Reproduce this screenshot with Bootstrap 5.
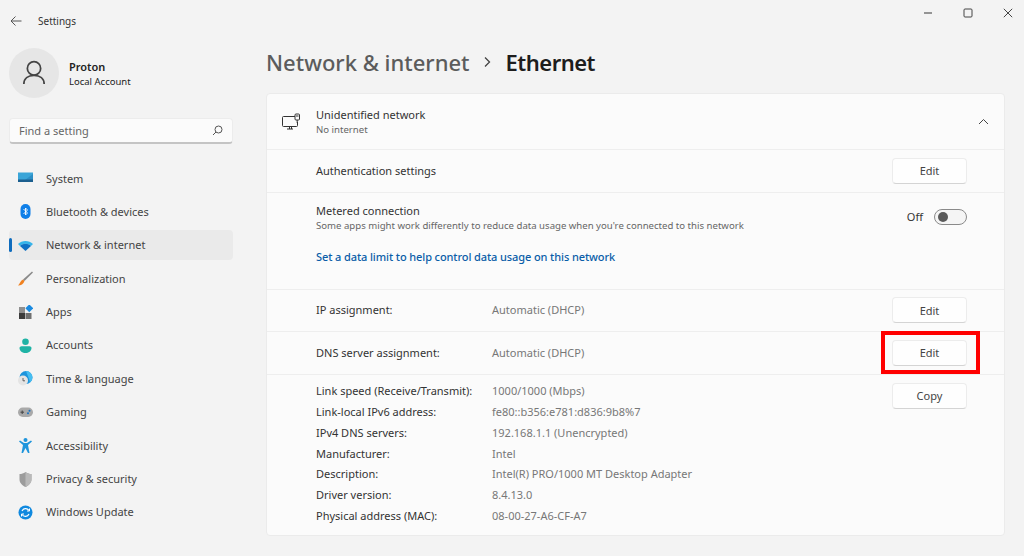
<!DOCTYPE html>
<html lang="en">
<head>
<meta charset="utf-8">
<title>Settings</title>
<link rel="stylesheet" href="https://cdn.jsdelivr.net/npm/bootstrap@5.3.0/dist/css/bootstrap.min.css">
<style>
html,body{height:100%;overflow:hidden}
body{background:#f3f3f3;color:#1b1b1b;font-family:"Noto Sans","Open Sans",sans-serif;font-size:11px;line-height:16px}
.win-shell{width:1024px;height:556px}
.title-bar{height:41px;padding-left:10px}
.title-text{font-size:10px;margin-left:16px;color:#333}
.win-ctrls{gap:30px;padding-right:11px;margin-top:8px}
.side-col{width:242px;padding-left:9px;padding-right:9px;flex:none}
.user-box{height:51px;margin-top:6px;gap:10px}
.user-text{padding-top:3px}
.avatar{width:50px;height:50px;border-radius:50%;background:#e6e6e6}
.user-name{font-size:11px;font-weight:600;line-height:15px;color:#222}
.user-sub{font-size:9.5px;line-height:16px;color:#222}
.search-box{height:26px;margin-top:20px;width:224px;background:#fbfbfb;border:1px solid #ececec;border-bottom:2px solid #c4c4c4;border-radius:4px;padding:0 9px;color:#666;font-size:11px}
.menu-list{margin-top:19.5px;list-style:none;padding:0;width:224px}
.menu-item{height:30px;margin-bottom:3.4px;border-radius:4px;padding-left:9px;gap:13px;position:relative;color:#444;font-size:11px}
.menu-item.is-on{background:#eaeaea}
.menu-item.is-on::before{content:"";position:absolute;left:0;top:8px;width:3px;height:14px;border-radius:2px;background:#0f6cbd}
.menu-icon{width:15px;height:15px;flex:none}
.main-col{width:739px;margin-left:24px;flex:none}
.crumbs{height:53px;margin-top:-1px;padding-bottom:10px;font-size:22px;font-weight:500;line-height:44px;gap:13px;color:#5c5c5c}
.crumb-now{color:#1d1d1d;font-weight:600;letter-spacing:-.5px;margin-left:2px}
.set-panel{background:#fbfbfb;border:1px solid #ebebeb;border-radius:4px;height:443px;width:739px;font-size:11px;color:#333}
.set-row{border-bottom:1px solid #eeeeee;padding-left:49px;padding-right:37px}
.head-row{height:56px;padding-left:14px;padding-right:15px;gap:15px}
.row-42{height:42.6px}
.metered-row{height:97px;padding-top:10px}
.set-sub{font-size:9.6px;line-height:14px;color:#666}
.set-key{width:176px;flex:none}
.set-val{color:#777}
.win-btn{width:75px;height:26px;flex:none;background:#fefefe;border:1px solid #ececec;border-bottom-color:#d4d4d4;border-radius:4px;padding:0;font-size:11px;color:#444;line-height:1;--bs-btn-hover-bg:#fefefe}
.mark-wrap{position:relative}
.red-frame{position:absolute;left:-11px;right:-13px;top:-9px;bottom:-8px;border:4px solid #f00;pointer-events:none}
.data-link{color:#0a5da8;text-decoration:none;font-weight:500;margin-top:16px;display:block;letter-spacing:-.1px}
.toggle-wrap{gap:11px;margin-top:6px;color:#333}
.switch-track{width:33px;height:16px;border:1px solid #8a8a8a;border-radius:8px;background:#f5f5f5;padding-left:3px}
.switch-knob{width:10px;height:10px;border-radius:50%;background:#5a5a5a}
.detail-block{padding:6px 37px 0 49px}
.detail-line{height:20.8px}
.detail-list{flex:1;padding-top:0}
.copy-btn{margin-top:2px}
</style>
</head>
<body>
<div class="win-shell d-flex flex-column">
  <div class="title-bar d-flex align-items-center">
    <svg width="12" height="12" viewBox="0 0 12 12" fill="none" stroke="#555" stroke-width="1"><path d="M11.5 6H1M5.5 1.5 1 6l4.5 4.500"/></svg>
    <span class="title-text">Settings</span>
    <div class="ms-auto win-ctrls d-flex align-items-center align-self-start">
      <svg width="10" height="10" viewBox="0 0 10 10" fill="none" stroke="#555" stroke-width="1.2"><path d="M1 5h8"/></svg>
      <svg width="10" height="10" viewBox="0 0 10 10" fill="none" stroke="#444" stroke-width="1"><rect x="1" y="1" width="8" height="8" rx="1"/></svg>
      <svg width="10" height="10" viewBox="0 0 10 10" fill="none" stroke="#444" stroke-width="1"><path d="M.8.8l8.4 8.4M9.2.8.8 9.2"/></svg>
    </div>
  </div>
  <div class="d-flex flex-fill">
    <div class="side-col">
      <div class="user-box d-flex align-items-center">
        <div class="avatar d-flex align-items-center justify-content-center">
          <svg width="24" height="26" viewBox="0 0 26 28" fill="none" stroke="#444" stroke-width="1.9"><circle cx="13" cy="9" r="7.2"/><path d="M2 26c0-6 4.500-9.500 11-9.500S24 20 24 26"/></svg>
        </div>
        <div class="user-text">
          <div class="user-name">Proton</div>
          <div class="user-sub">Local Account</div>
        </div>
      </div>
      <div class="search-box d-flex align-items-center justify-content-between">
        <span>Find a setting</span>
        <svg width="11" height="11" viewBox="0 0 11 11" fill="none" stroke="#555" stroke-width="1"><circle cx="6.500" cy="4.500" r="3.500"/><path d="M4 7 1 10"/></svg>
      </div>
      <ul class="menu-list">
        <li class="menu-item d-flex align-items-center">
          <svg class="menu-icon" viewBox="0 0 15 15"><rect y="1.500" width="15" height="9" fill="#3aa5d8"/><path d="M5 10.500 15 3v7.500z" fill="#2c8fc6"/><rect y="8.500" width="15" height="2.500" fill="#1b5f8f"/></svg>
          <span>System</span>
        </li>
        <li class="menu-item d-flex align-items-center">
          <svg class="menu-icon" viewBox="0 0 15 15"><rect x="2.500" y="0" width="10" height="15" rx="5" fill="#0f7fe8"/><path d="M5.500 5l4 4-2 2V4l2 2-4 4" fill="none" stroke="#fff" stroke-width=".9"/></svg>
          <span>Bluetooth &amp; devices</span>
        </li>
        <li class="menu-item is-on d-flex align-items-center">
          <svg class="menu-icon" viewBox="0 0 15 15"><path d="M0 6c4-4 11-4 15 0l-2 2c-3-3-8-3-11 0z" fill="#35b4ea"/><path d="M2 8c3-3 8-3 11 0l-5.500 5z" fill="#1071c4"/></svg>
          <span>Network &amp; internet</span>
        </li>
        <li class="menu-item d-flex align-items-center">
          <svg class="menu-icon" viewBox="0 0 15 15"><path d="M14 .500 15 1.500 6.500 10 5 8.500z" fill="#8a8a8a"/><path d="M5 8.500 6.500 10c-1 3-3.500 4.500-6.500 4.500C2 13 2 10 5 8.500z" fill="#f0811f"/></svg>
          <span>Personalization</span>
        </li>
        <li class="menu-item d-flex align-items-center">
          <svg class="menu-icon" viewBox="0 0 15 15"><rect x="1" y="2" width="6" height="6" fill="#8f8f8f"/><rect x="1" y="8" width="6" height="6" fill="#3b3b3b"/><rect x="7.500" y="8" width="6" height="6" fill="#707070"/><rect x="8.500" y="0.500" width="5.500" height="5.500" fill="#1a8ae0" transform="rotate(45 11.250 3.250)"/></svg>
          <span>Apps</span>
        </li>
        <li class="menu-item d-flex align-items-center">
          <svg class="menu-icon" viewBox="0 0 15 15"><circle cx="7.500" cy="3.800" r="3.300" fill="#1fb3a5"/><path d="M1.500 10c0-1 1-1.800 2-1.800h8c1 0 2 .8 2 1.800 0 3-3 5-6 5s-6-2-6-5z" fill="#1fb3a5"/></svg>
          <span>Accounts</span>
        </li>
        <li class="menu-item d-flex align-items-center">
          <svg class="menu-icon" viewBox="0 0 15 15"><circle cx="8" cy="6.500" r="6.500" fill="#1d94dc"/><path d="M8 0a6.500 6.500 0 0 1 4 11.500C11 7 9 3 8 0z" fill="#46bdf0"/><circle cx="5" cy="9.500" r="5" fill="#e4e4e4"/><path d="M5 7v2.800h2" fill="none" stroke="#555" stroke-width=".9"/></svg>
          <span>Time &amp; language</span>
        </li>
        <li class="menu-item d-flex align-items-center">
          <svg class="menu-icon" viewBox="0 0 15 15"><rect y="2.500" width="15" height="9.500" rx="4.700" fill="#a9a9a9"/><path d="M2.500 7.200h3.500M4.200 5.500v3.500" stroke="#444" stroke-width="1"/><circle cx="10" cy="8.300" r="1" fill="#1672c4"/><circle cx="11.500" cy="5.800" r="1" fill="#1672c4"/></svg>
          <span>Gaming</span>
        </li>
        <li class="menu-item d-flex align-items-center">
          <svg class="menu-icon" viewBox="0 0 15 15"><circle cx="7.500" cy="2" r="2" fill="#1f95dc"/><path d="M1 3.500 2 2.500 6 5h3l4-2.500 1 1L10 7l1.500 8H10L7.500 10 5 15H3.500L5 7z" fill="#1f95dc"/></svg>
          <span>Accessibility</span>
        </li>
        <li class="menu-item d-flex align-items-center">
          <svg class="menu-icon" viewBox="0 0 15 15"><path d="M7.500 0c2 1.500 4 2 6 2v5.500c0 3.500-3 6-6 7.500-3-1.500-6-4-6-7.500V2c2 0 4-.5 6-2z" fill="#9c9c9c"/><path d="M7.500 0c2 1.500 4 2 6 2v5.500c0 3.500-3 6-6 7.500z" fill="#b9b9b9"/></svg>
          <span>Privacy &amp; security</span>
        </li>
        <li class="menu-item d-flex align-items-center">
          <svg class="menu-icon" viewBox="0 0 15 15"><circle cx="7.500" cy="7.500" r="7" fill="#1089df"/><path d="M11 5.500A4 4 0 0 0 4 6M4 9.500A4 4 0 0 0 11 9" fill="none" stroke="#fff" stroke-width="1.200"/><path d="M11.500 3.500v2.500H9M3.500 11.500V9H6" fill="none" stroke="#fff" stroke-width="1"/></svg>
          <span>Windows Update</span>
        </li>
      </ul>
    </div>
    <div class="main-col">
      <div class="crumbs d-flex align-items-center">
        <span>Network &amp; internet</span>
        <svg width="8" height="12" viewBox="0 0 8 12" fill="none" stroke="#444" stroke-width="1.300"><path d="M2 1.500 6.500 6 2 10.500"/></svg>
        <span class="crumb-now">Ethernet</span>
      </div>
      <div class="set-panel d-flex flex-column">
        <div class="set-row head-row d-flex align-items-center">
          <svg width="20" height="20" viewBox="0 0 20 20" fill="none" stroke="#333" stroke-width="1"><path d="M14 4.500H2.500a1 1 0 0 0-1 1v8a1 1 0 0 0 1 1h13a1 1 0 0 0 1-1V10"/><path d="M6 17h6M8.500 14.500V17M10.500 14.500V17"/><rect x="14" y="2" width="4.500" height="6" rx="1"/><path d="M16.200 8v3M15 4h2.500"/></svg>
          <div>
            <div>Unidentified network</div>
            <div class="set-sub">No internet</div>
          </div>
          <svg class="ms-auto" width="11" height="7" viewBox="0 0 11 7" fill="none" stroke="#444" stroke-width="1"><path d="M1 6 5.500 1.500 10 6"/></svg>
        </div>
        <div class="set-row row-42 d-flex align-items-center justify-content-between">
          <span>Authentication settings</span>
          <button type="button" class="btn win-btn">Edit</button>
        </div>
        <div class="set-row metered-row d-flex justify-content-between align-items-start">
          <div>
            <div>Metered connection</div>
            <div class="set-sub">Some apps might work differently to reduce data usage when you're connected to this network</div>
            <a class="data-link" href="#">Set a data limit to help control data usage on this network</a>
          </div>
          <div class="toggle-wrap d-flex align-items-center">
            <span>Off</span>
            <span class="switch-track d-flex align-items-center"><span class="switch-knob"></span></span>
          </div>
        </div>
        <div class="set-row row-42 d-flex align-items-center">
          <span class="set-key">IP assignment:</span>
          <span class="set-val">Automatic (DHCP)</span>
          <button type="button" class="btn win-btn ms-auto">Edit</button>
        </div>
        <div class="set-row row-42 d-flex align-items-center">
          <span class="set-key">DNS server assignment:</span>
          <span class="set-val">Automatic (DHCP)</span>
          <div class="ms-auto mark-wrap">
            <button type="button" class="btn win-btn d-block">Edit</button>
            <div class="red-frame"></div>
          </div>
        </div>
        <div class="detail-block d-flex align-items-start">
          <div class="detail-list">
            <div class="detail-line d-flex align-items-center"><span class="set-key">Link speed (Receive/Transmit):</span><span class="set-val">1000/1000 (Mbps)</span></div>
            <div class="detail-line d-flex align-items-center"><span class="set-key">Link-local IPv6 address:</span><span class="set-val">fe80::b356:e781:d836:9b8%7</span></div>
            <div class="detail-line d-flex align-items-center"><span class="set-key">IPv4 DNS servers:</span><span class="set-val">192.168.1.1 (Unencrypted)</span></div>
            <div class="detail-line d-flex align-items-center"><span class="set-key">Manufacturer:</span><span class="set-val">Intel</span></div>
            <div class="detail-line d-flex align-items-center"><span class="set-key">Description:</span><span class="set-val">Intel(R) PRO/1000 MT Desktop Adapter</span></div>
            <div class="detail-line d-flex align-items-center"><span class="set-key">Driver version:</span><span class="set-val">8.4.13.0</span></div>
            <div class="detail-line d-flex align-items-center"><span class="set-key">Physical address (MAC):</span><span class="set-val">08-00-27-A6-CF-A7</span></div>
          </div>
          <button type="button" class="btn win-btn copy-btn">Copy</button>
        </div>
      </div>
    </div>
  </div>
</div>
<script src="https://cdn.jsdelivr.net/npm/bootstrap@5.3.0/dist/js/bootstrap.bundle.min.js"></script>
</body>
</html>
